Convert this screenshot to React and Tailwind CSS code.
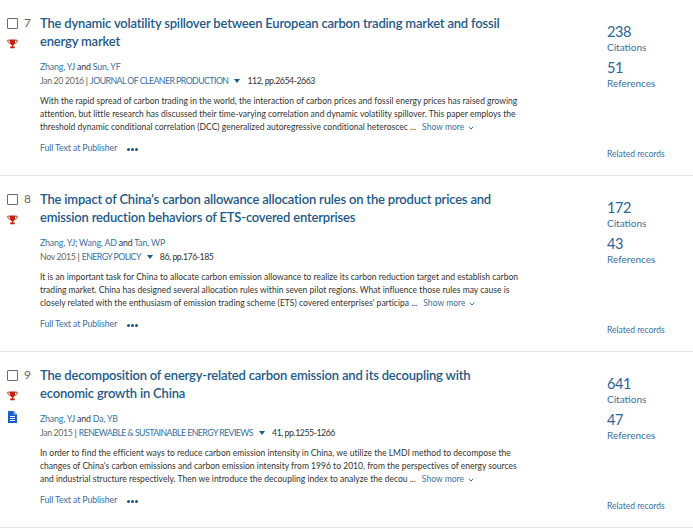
const F = { fontFamily: '"Lato", "Noto Sans", sans-serif' };

function Trophy() {
  return (
    <svg width="11" height="10" viewBox="0 0 11 10" className="block">
      <path d="M3 0.5h5v3.2C8 5.3 6.8 6 5.5 6S3 5.3 3 3.7z" fill="#b8260f" />
      <path d="M3 1.2H.7c0 2 .9 3 2.6 3.2M8 1.2h2.3c0 2-.9 3-2.6 3.2" fill="none" stroke="#b8260f" strokeWidth="0.9" />
      <path d="M4.9 6h1.2v1.6H4.9zM3.2 7.6h4.6v1.6H3.2z" fill="#b8260f" />
    </svg>
  );
}

function Doc() {
  return (
    <svg width="9" height="12" viewBox="0 0 9 12" className="block">
      <path d="M0 0h5.6L9 3.4V12H0z" fill="#1a5fc4" />
      <path d="M5.6 0v3.4H9" fill="#8fb4e8" />
      <path d="M2 5.5h5M2 7.5h5M2 9.5h5" stroke="#fff" strokeWidth="1" />
    </svg>
  );
}

function Row({ n, t1, t2, authors, date, journal, vol, a1, a2, a3, cit, refs, doc }) {
  return (
    <div className="flex h-[176px] border-b border-[#e6e6e6] pt-[14px]">
      <div className="w-[40px] shrink-0 pl-[7px]">
        <div className="flex items-center h-[18px]">
          <span className="w-[11px] h-[11px] border-[1.5px] border-[#6b6b6b] rounded-[1px] bg-white" />
          <span className="ml-[6px] text-[12px] text-[#666666] leading-none">{n}</span>
        </div>
        <div className="mt-[7px]"><Trophy /></div>
        {doc && <div className="mt-[10px] ml-[1px]"><Doc /></div>}
      </div>
      <div className="w-[567px] shrink-0">
        <div className="text-[13px] leading-[18px] font-semibold text-[#1d5a8a] tracking-[-0.19px] h-[36px]">
          <div className="whitespace-nowrap">{t1}</div>
          <div className="whitespace-nowrap">{t2}</div>
        </div>
        <div className="mt-[10px] text-[8.75px] leading-[14px] tracking-[-0.15px] text-[#333] whitespace-nowrap">{authors}</div>
        <div className="text-[8.75px] leading-[14px] text-[#666] flex items-center whitespace-nowrap">
          <span className="tracking-[-0.35px]">{date}</span>
          <span className="mx-[2px] text-[#444]">|</span>
          <span className="text-[#3a70a0] tracking-[-0.55px]">{journal}</span>
          <svg width="6" height="4" viewBox="0 0 6 4" className="ml-[6px] mr-[7px]"><path d="M0 0h6L3 4z" fill="#1d5a8a" /></svg>
          <span className="text-[#333] tracking-[-0.45px]">{vol}</span>
        </div>
        <div className="mt-[7px] text-[8.5px] leading-[13px] tracking-[0.02px] text-[#333] w-[500px]">
          <div className="whitespace-nowrap">{a1}</div>
          <div className="whitespace-nowrap">{a2}</div>
          <div className="whitespace-nowrap flex items-center">
            <span>{a3}</span>
            <span className="ml-[6px] text-[#3a70a0]">Show more</span>
            <svg width="6" height="4" viewBox="0 0 6 4" className="ml-[4px]"><path d="M.7.7L3 3l2.3-2.3" fill="none" stroke="#3a70a0" strokeWidth="1" /></svg>
          </div>
        </div>
        <div className="mt-[7px] flex items-center text-[8.75px] leading-[14px] tracking-[-0.1px] text-[#3a70a0]">
          <span>Full Text at Publisher</span>
          <span className="ml-[10px] mt-[3px] flex gap-[1px]">
            <i className="w-[3px] h-[3px] rounded-full bg-[#1d4f80]" />
            <i className="w-[3px] h-[3px] rounded-full bg-[#1d4f80]" />
            <i className="w-[3px] h-[3px] rounded-full bg-[#1d4f80]" />
          </span>
        </div>
      </div>
      <div className="flex-1 flex flex-col pt-[9px] pb-[15px] text-[#3a70a0]">
        <div className="text-[14.5px] leading-[18px] tracking-[-0.4px] text-[#2a6496]">{cit}</div>
        <div className="text-[10px] leading-[12px]">Citations</div>
        <div className="mt-[6px] text-[14.5px] leading-[18px] tracking-[-0.4px] text-[#2a6496]">{refs}</div>
        <div className="text-[10px] leading-[12px]">References</div>
        <div className="mt-auto text-[8.5px] leading-[12px] whitespace-nowrap">Related records</div>
      </div>
    </div>
  );
}

const L = ({ children }) => <span className="text-[#3a70a0]">{children}</span>;

export default function App() {
  return (
    <div className="w-[693px] h-[530px] overflow-hidden bg-white" style={F}>
      <Row n="7" t1="The dynamic volatility spillover between European carbon trading market and fossil" t2="energy market"
        authors={<><L>Zhang, YJ</L> and <L>Sun, YF</L></>} date="Jan 20 2016" journal="JOURNAL OF CLEANER PRODUCTION" vol="112, pp.2654-2663"
        a1="With the rapid spread of carbon trading in the world, the interaction of carbon prices and fossil energy prices has raised growing"
        a2="attention, but little research has discussed their time-varying correlation and dynamic volatility spillover. This paper employs the"
        a3="threshold dynamic conditional correlation (DCC) generalized autoregressive conditional heteroscec ..." cit="238" refs="51" />
      <Row n="8" t1="The impact of China's carbon allowance allocation rules on the product prices and" t2="emission reduction behaviors of ETS-covered enterprises"
        authors={<><L>Zhang, YJ</L>; <L>Wang, AD</L> and <L>Tan, WP</L></>} date="Nov 2015" journal="ENERGY POLICY" vol="86, pp.176-185"
        a1="It is an important task for China to allocate carbon emission allowance to realize its carbon reduction target and establish carbon"
        a2="trading market. China has designed several allocation rules within seven pilot regions. What influence those rules may cause is"
        a3="closely related with the enthusiasm of emission trading scheme (ETS) covered enterprises' participa ..." cit="172" refs="43" />
      <Row n="9" doc t1="The decomposition of energy-related carbon emission and its decoupling with" t2="economic growth in China"
        authors={<><L>Zhang, YJ</L> and <L>Da, YB</L></>} date="Jan 2015" journal="RENEWABLE & SUSTAINABLE ENERGY REVIEWS" vol="41, pp.1255-1266"
        a1="In order to find the efficient ways to reduce carbon emission intensity in China, we utilize the LMDI method to decompose the"
        a2="changes of China's carbon emissions and carbon emission intensity from 1996 to 2010, from the perspectives of energy sources"
        a3="and industrial structure respectively. Then we introduce the decoupling index to analyze the decou ..." cit="641" refs="47" />
    </div>
  );
}
